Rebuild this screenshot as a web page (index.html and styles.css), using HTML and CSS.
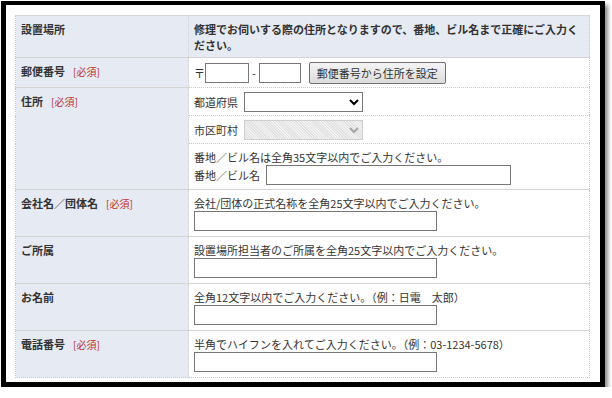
FILE: index.html
```html
<!DOCTYPE html>
<html lang="ja">
<head>
    <meta charset="UTF-8">
    <title>設置場所</title>
    <link rel="stylesheet" href="styles.css">
</head>
<body>
    <div class="frame">
        <table class="form">
            <tr class="head">
                <th class="label">設置場所</th>
                <th class="value">修理でお伺いする際の住所となりますので、番地、ビル名まで正確にご入力ください。</th>
            </tr>
            <tr>
                <th class="label">郵便番号<span class="req">[必須]</span></th>
                <td class="value zip">
                    <div class="ziprow">
                        <span>〒</span><input type="text" class="zip1"><span class="dash">-</span><input type="text" class="zip2">
                        <button type="button" class="btn">郵便番号から住所を設定</button>
                    </div>
                </td>
            </tr>
            <tr>
                <th class="label" rowspan="3">住所<span class="req">[必須]</span></th>
                <td class="value sub select-row">
                    <span class="sublabel">都道府県</span><select class="pref"><option></option></select>
                </td>
            </tr>
            <tr>
                <td class="value sub select-row">
                    <span class="sublabel">市区町村</span><select class="pref" disabled><option></option></select>
                </td>
            </tr>
            <tr>
                <td class="value sub street">
                    <div class="note">番地／ビル名は全角35文字以内でご入力ください。</div>
                    <span class="sublabel">番地／ビル名</span><input type="text" class="addr">
                </td>
            </tr>
            <tr>
                <th class="label">会社名／団体名<span class="req">[必須]</span></th>
                <td class="value">
                    <div class="note">会社/団体の正式名称を全角25文字以内でご入力ください。</div>
                    <input type="text" class="field">
                </td>
            </tr>
            <tr>
                <th class="label">ご所属</th>
                <td class="value">
                    <div class="note">設置場所担当者のご所属を全角25文字以内でご入力ください。</div>
                    <input type="text" class="field">
                </td>
            </tr>
            <tr>
                <th class="label">お名前</th>
                <td class="value">
                    <div class="note">全角12文字以内でご入力ください。（例：日電　太郎）</div>
                    <input type="text" class="field">
                </td>
            </tr>
            <tr>
                <th class="label">電話番号<span class="req">[必須]</span></th>
                <td class="value">
                    <div class="note">半角でハイフンを入れてご入力ください。（例：03-1234-5678）</div>
                    <input type="text" class="field">
                </td>
            </tr>
        </table>
    </div>
</body>
</html>
```

FILE: styles.css
```css
body {
    margin: 0;
    background-color: #fff;
    font-family: "Noto Sans CJK JP", "Noto Sans", sans-serif;
    font-size: 11px;
    color: #333;
}
.frame {
    width: 575px;
    margin: 1px 0 0 1px;
    padding: 10px 10px 4px 9px;
    border: 5px solid #000;
    border-top-width: 4px;
    background-color: #fff;
    box-shadow: 3px 4px 4px rgba(0, 0, 0, 0.45);
}
.form {
    width: 575px;
    border-collapse: collapse;
    border: 1px dotted #c8c8c8;
}
.form th,
.form td {
    text-align: left;
    vertical-align: top;
    line-height: 16px;
    padding: 5px 5px 5px;
    border-top: 1px solid #d4d4d4;
}
.form .head th {
    padding-bottom: 4px;
}
.label {
    width: 162px;
    background-color: #e6eaf2;
    font-weight: bold;
    border-right: 1px dotted #d0d0d0;
}
.head .value {
    background-color: #e6eaf2;
    font-weight: bold;
}
.value {
    background-color: #fff;
}
.req {
    margin-left: 8px;
    font-size: 10px;
    font-weight: normal;
    color: #c0302c;
}
.form td.zip {
    padding-top: 4px;
    padding-bottom: 3px;
}
.ziprow {
    display: flex;
    align-items: center;
    height: 22px;
}
.dash {
    margin: 0 3px;
}
input[type="text"] {
    box-sizing: border-box;
    height: 20px;
    margin: 0;
    padding: 0 3px;
    border: 1px solid #777;
    background-color: #fff;
    vertical-align: middle;
}
.zip1 {
    width: 44px;
    margin-left: 1px;
}
.zip2 {
    width: 42px;
}
.btn {
    box-sizing: border-box;
    height: 22px;
    margin-left: 8px;
    padding: 0 7px;
    border: 1px solid #707070;
    border-radius: 2px;
    background: linear-gradient(#f4f4f4, #dcdcdc);
    font-family: inherit;
    font-size: 11px;
    line-height: 18px;
    color: #333;
}
.form td.sub {
    border-top: 1px dotted #c8c8c8;
}
.form td.select-row {
    padding-top: 4px;
    padding-bottom: 3px;
}
.form td.street {
    padding-bottom: 4px;
}
.sublabel {
    display: inline-block;
    margin-right: 6px;
    vertical-align: middle;
}
.pref {
    box-sizing: border-box;
    width: 119px;
    height: 20px;
    margin: 0;
    border: 1px solid #777;
    border-radius: 0;
    background-color: #fff;
    vertical-align: middle;
}
.pref:disabled {
    border-color: #bbb;
    background: repeating-linear-gradient(45deg, #d6d6d6 0 1px, #ececec 1px 2px);
}
.note {
    line-height: 16px;
}
.addr {
    width: 245px;
    margin-top: 1px;
}
.field {
    width: 243px;
    margin-top: 1px;
}
```
